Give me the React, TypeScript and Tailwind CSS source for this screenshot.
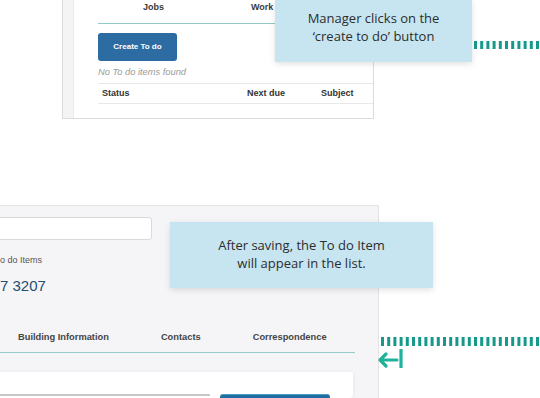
import React from "react";

const sans = { fontFamily: '"Liberation Sans", Arial, sans-serif' };
const open = { fontFamily: '"Open Sans", "Noto Sans", sans-serif' };

function Dashes({ width, height }: { width: number; height: number }) {
  return (
    <svg width={width} height={height} className="block">
      <line
        x1={0}
        y1={height / 2}
        x2={width}
        y2={height / 2}
        stroke="#17998a"
        strokeWidth={height}
        strokeDasharray="3 3.2"
      />
    </svg>
  );
}

function TopFragment() {
  return (
    <div
      className="absolute left-[62px] top-0 w-[312px] h-[119px] flex border-l border-r border-b border-[#dcdcdc] bg-[#f4f4f5]"
      style={sans}
    >
      <div className="ml-[10px] flex-1 bg-white border-l border-[#ececec] flex flex-col pl-[24px]">
        <div className="h-[24px] border-b border-[#8fcac7] flex text-[9px] font-bold text-[#3a3a3a] leading-[14px]">
          <div className="w-[111px] text-center">Jobs</div>
          <div className="pl-[42px] whitespace-nowrap">Work Orders</div>
        </div>
        <button className="mt-[9px] w-[79px] h-[28px] rounded-[3px] bg-[#2d6ca3] text-white text-[8px] font-bold">
          Create To do
        </button>
        <div className="mt-[5px] h-[12px] leading-[12px] text-[9.3px] italic text-[#9a9a9a]">
          No To do items found
        </div>
        <div className="mt-[5px] h-[21px] border-t border-b border-[#e8e8e8] flex items-center text-[9px] font-bold text-[#333]">
          <div className="pl-[4px] w-[149px]">Status</div>
          <div className="w-[74px]">Next due</div>
          <div>Subject</div>
        </div>
      </div>
    </div>
  );
}

function BottomFragment() {
  return (
    <div
      className="absolute left-0 top-[205px] w-[379px] h-[193px] border-t border-r border-[#e3e3e3] bg-[#f5f5f7] flex flex-col overflow-hidden"
      style={sans}
    >
      <div className="mt-[11px] ml-[-5px] w-[157px] h-[23px] bg-white border border-[#dadada] rounded-[3px]" />
      <div className="mt-[14px] h-[12px] leading-[12px] text-[9px] text-[#555]">o do Items</div>
      <div className="mt-[11px] h-[18px] leading-[18px] text-[15px] text-[#264c74]">7 3207</div>
      <div className="mt-[28px] w-[355px] h-[30px] border-b-[1.5px] border-[#93cdca] flex pl-[18px] gap-[52px] pt-[7px] text-[9.3px] font-bold text-[#444] leading-[14px]">
        <div>Building Information</div>
        <div>Contacts</div>
        <div>Correspondence</div>
      </div>
      <div className="mt-[19px] w-[353px] flex-1 bg-white shadow-[0_1px_4px_rgba(0,0,0,0.08)] rounded-r-[3px] flex pt-[22px]">
        <div className="w-[210px] border-t-2 border-[#c8c8c8] bg-white" />
        <div className="ml-[10px] w-[110px] bg-[#1f6e9f] border-t border-[#4a9ac8] rounded-t-[3px]" />
      </div>
    </div>
  );
}

export default function App() {
  return (
    <div className="relative w-[540px] h-[398px] overflow-hidden bg-white">
      <TopFragment />
      <BottomFragment />

      <div
        className="absolute left-[275px] top-0 w-[197px] h-[62px] bg-[#c6e5f1] shadow-[0_2px_6px_rgba(0,0,0,0.12)] flex flex-col items-center justify-center text-[13px] leading-[18px] text-[#2d2d2d]"
        style={open}
      >
        <div className="mt-[-8px]">Manager clicks on the</div>
        <div>‘create to do’ button</div>
      </div>

      <div
        className="absolute left-[170px] top-[222px] w-[263px] h-[66px] bg-[#c6e5f1] shadow-[0_2px_6px_rgba(0,0,0,0.12)] flex flex-col items-center justify-center text-[13px] leading-[18px] text-[#2d2d2d]"
        style={open}
      >
        <div className="mt-[-2px]">After saving, the To do Item</div>
        <div>will appear in the list.</div>
      </div>

      <div className="absolute left-[474px] top-[41px]">
        <Dashes width={66} height={8} />
      </div>
      <div className="absolute left-[381px] top-[337px]">
        <Dashes width={159} height={9} />
      </div>
      <svg className="absolute left-[376px] top-[347px]" width={30} height={23}>
        <path
          d="M10 7 L4 13 L10 19 M4 13 H21"
          fill="none"
          stroke="#1fb39a"
          strokeWidth={3.2}
          strokeLinecap="round"
          strokeLinejoin="round"
        />
        <line x1={25} y1={2} x2={25} y2={21} stroke="#1fb39a" strokeWidth={3.2} />
      </svg>
    </div>
  );
}
